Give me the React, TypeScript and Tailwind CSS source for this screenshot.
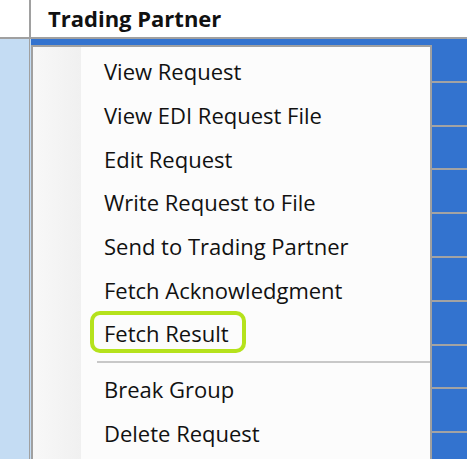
import React from "react";

const items1 = [
  "View Request",
  "View EDI Request File",
  "Edit Request",
  "Write Request to File",
  "Send to Trading Partner",
  "Fetch Acknowledgment",
];
const items2 = ["Break Group", "Delete Request"];

function Item({ label, highlight }: { label: string; highlight?: boolean }) {
  return (
    <div className="relative flex h-[43.67px] items-center pl-[23px] text-[22px] text-[#111]">
      {highlight && (
        <div className="absolute left-[9px] top-[-1px] h-[42px] w-[156px] rounded-[10px] border-[4px] border-[#b5e21c]" />
      )}
      <span className="relative">{label}</span>
    </div>
  );
}

export default function App() {
  const rows = Array.from({ length: 10 });
  return (
    <div
      className="relative h-[459px] w-[467px] overflow-hidden bg-white"
      style={{ fontFamily: '"Open Sans", "Noto Sans", sans-serif' }}
    >
      {/* header */}
      <div className="flex h-[39px] border-b-2 border-[#a0a0a0]">
        <div className="w-[31px] border-r-2 border-[#a0a0a0] bg-white" />
        <div className="flex flex-1 items-center bg-white pl-[17px] text-[22px] font-bold text-[#111]">
          Trading Partner
        </div>
      </div>
      {/* body */}
      <div className="flex">
        <div className="flex w-[31px]">
          <div className="w-[29px] bg-[#c4dcf3]" />
          <div className="w-[1px] bg-[#a0a0a0]" />
          <div className="w-[1px] bg-[#c4dcf3]" />
        </div>
        <div className="flex flex-1 flex-col">
          {rows.map((_, i) => (
            <div key={i} className="h-[43.8px] border-b-2 border-[#a3a3a3] bg-[#3373cf]" />
          ))}
        </div>
      </div>
      {/* context menu */}
      <div className="absolute left-[31px] top-[45px] flex h-[430px] w-[401px] border-2 border-[#a0a0a0] bg-[#fcfcfc]">
        <div className="w-[48px] bg-gradient-to-r from-[#f8f8f8] to-[#f0f0f0]" />
        <div className="flex flex-1 flex-col pt-[3px]">
          {items1.map((l) => (
            <Item key={l} label={l} />
          ))}
          <Item label="Fetch Result" highlight />
          <div className="flex h-[12.3px] items-center pl-[16px]">
            <div className="h-[2px] w-full bg-[#c8c8c8]" />
          </div>
          {items2.map((l) => (
            <Item key={l} label={l} />
          ))}
        </div>
      </div>
    </div>
  );
}
